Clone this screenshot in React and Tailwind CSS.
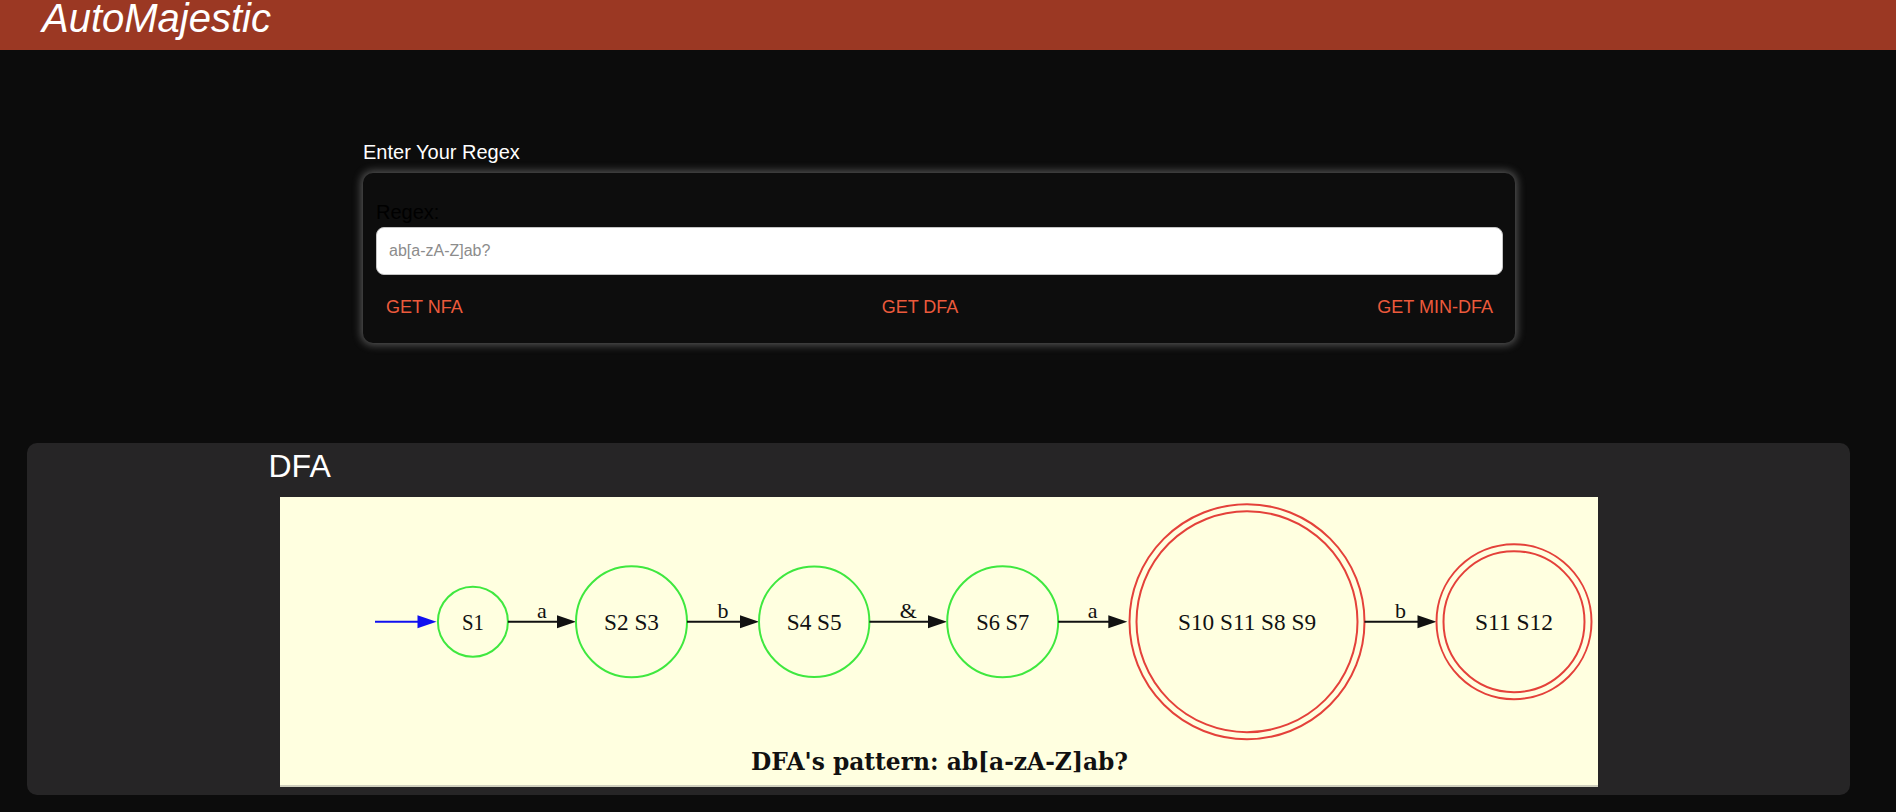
const GREEN = '#3fe83f';
const RED = '#e4413a';
const CY = 124.7;
const SERIF = "'Liberation Serif', 'Times New Roman', serif";

function Arrow({ from, to, label, color = '#111' }) {
  const base = to - 19;
  return (
    <g>
      <line x1={from} y1={CY} x2={base + 1} y2={CY} stroke={color} strokeWidth="2" />
      <polygon points={`${base},${CY - 6.5} ${to},${CY} ${base},${CY + 6.5}`} fill={color} />
      {label && (
        <text x={(from + to) / 2} y={CY - 4} textAnchor="middle" fontSize="22" fontFamily={SERIF} fill="#111">
          {label}
        </text>
      )}
    </g>
  );
}

function State({ cx, r, label, width, final }) {
  const color = final ? RED : GREEN;
  return (
    <g>
      <circle cx={cx} cy={CY} r={r} fill="none" stroke={color} strokeWidth="2" />
      {final && <circle cx={cx} cy={CY} r={r - 7} fill="none" stroke={color} strokeWidth="2" />}
      <text
        x={cx}
        y={CY + 8}
        textAnchor="middle"
        fontSize="23"
        fontFamily={SERIF}
        fill="#111"
        textLength={width}
        lengthAdjust="spacingAndGlyphs"
      >
        {label}
      </text>
    </g>
  );
}

function DfaGraph() {
  return (
    <svg width="1318" height="288" viewBox="0 0 1318 288" className="block">
      <Arrow from={95} to={156.5} color="#1010f0" />
      <State cx={192.9} r={35} label="S1" width={22} />
      <Arrow from={227.9} to={296} label="a" />
      <State cx={351.5} r={55.5} label="S2 S3" width={55} />
      <Arrow from={407} to={479} label="b" />
      <State cx={534.2} r={55.2} label="S4 S5" width={55} />
      <Arrow from={589.4} to={667} label="&" />
      <State cx={722.7} r={55.5} label="S6 S7" width={53} />
      <Arrow from={778.2} to={847.3} label="a" />
      <State cx={967} r={117.5} label="S10 S11 S8 S9" width={138} final />
      <Arrow from={1084.5} to={1156.5} label="b" />
      <State cx={1234} r={77.5} label="S11 S12" width={78} final />
      <text
        x={659.5}
        y={273}
        textAnchor="middle"
        fontSize="24"
        fontWeight="bold"
        fontFamily="'DejaVu Serif', 'Liberation Serif', serif"
        fill="#111"
        textLength={377}
        lengthAdjust="spacingAndGlyphs"
      >
        DFA's pattern: ab[a-zA-Z]ab?
      </text>
    </svg>
  );
}

export default function App() {
  return (
    <div className="min-h-screen bg-[#0c0c0c] font-['Liberation_Sans',Arial,sans-serif]">
      <header className="h-[50px] bg-[#9b3823] pl-[42px]">
        <h1 className="text-[40px] leading-[36px] italic text-white">AutoMajestic</h1>
      </header>

      <section className="ml-[363px] w-[1152px] pt-[91px]">
        <div className="text-[20px] leading-[23px] text-white mb-[9px]">Enter Your Regex</div>
        <div className="rounded-[10px] bg-[#0d0d0d] pl-[13px] pr-[12px] pt-[28px] pb-[25px] shadow-[0_0_9px_2px_rgba(210,210,210,0.38)]">
          <label className="block text-[20px] leading-[23px] text-black">Regex:</label>
          <input
            type="text"
            placeholder="ab[a-zA-Z]ab?"
            className="mt-[3px] block w-full h-[48px] rounded-[8px] border border-[#c4c4c4] bg-white px-[12px] text-[16px] text-[#333] placeholder:text-[#8c8c8c] outline-none"
          />
          <div className="mt-[22px] flex justify-between">
            <button className="px-[10px] text-[18px] leading-[21px] text-[#ec5a3c]">GET NFA</button>
            <button className="px-[10px] text-[18px] leading-[21px] text-[#ec5a3c]">GET DFA</button>
            <button className="px-[10px] text-[18px] leading-[21px] text-[#ec5a3c]">GET MIN-DFA</button>
          </div>
        </div>
      </section>

      <section className="ml-[27px] w-[1823px] mt-[100px] rounded-[10px] bg-[#262526] pt-[5px] pb-[8px]">
        <div className="w-[1340px] mx-auto">
          <h2 className="text-[32px] leading-[37px] text-white">DFA</h2>
          <div className="mt-[12px] w-[1318px] mx-auto bg-[#ffffe0] border-b-2 border-[#cfcfbd]">
            <DfaGraph />
          </div>
        </div>
      </section>
    </div>
  );
}
